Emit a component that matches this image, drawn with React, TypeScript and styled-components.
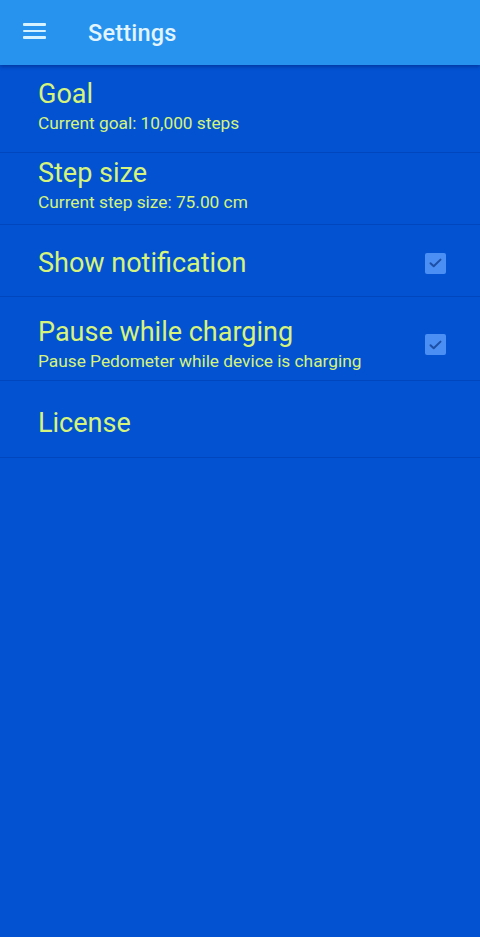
import React from 'react';
import styled, {createGlobalStyle} from 'styled-components';

const GlobalStyle = createGlobalStyle`
    html, body {
        margin: 0;
        padding: 0;
        background: #0352d1;
    }
    * {
        box-sizing: border-box;
    }
`

type Pref = {
    title: string;
    summary?: string;
    checked?: boolean;
    pad: [number, number];
};

const prefs: Pref[] = [
    {title: 'Goal', summary: 'Current goal: 10,000 steps', pad: [14, 18]},
    {title: 'Step size', summary: 'Current step size: 75.00 cm', pad: [5, 11]},
    {title: 'Show notification', checked: true, pad: [23, 18]},
    {title: 'Pause while charging', summary: 'Pause Pedometer while device is charging', checked: true, pad: [20, 8]},
    {title: 'License', pad: [27, 19]},
];

export default function App() {
    return (
        <>
            <GlobalStyle/>
            <Screen>
                <AppBar>
                    <MenuButton aria-label="menu">
                        <span/>
                        <span/>
                        <span/>
                    </MenuButton>
                    <BarTitle>Settings</BarTitle>
                </AppBar>
                <PrefList>
                    {prefs.map((p) => (
                        <PrefRow key={p.title} $top={p.pad[0]} $bottom={p.pad[1]}>
                            <PrefText>
                                <PrefTitle>{p.title}</PrefTitle>
                                {p.summary && <PrefSummary>{p.summary}</PrefSummary>}
                            </PrefText>
                            {p.checked !== undefined && (
                                <CheckBox>
                                    <svg width="13" height="10" viewBox="0 0 13 10">
                                        <path d="M1.5 5.2 L4.7 8.2 L11.5 1.6" fill="none" stroke="#1d4fa6"
                                              strokeWidth="2" strokeLinecap="round" strokeLinejoin="round"/>
                                    </svg>
                                </CheckBox>
                            )}
                        </PrefRow>
                    ))}
                </PrefList>
            </Screen>
        </>
    );
}

const Screen = styled.div`
    width: 480px;
    min-height: 937px;
    background: #0352d1;
    font-family: Roboto, "Liberation Sans", sans-serif;
`

const AppBar = styled.header`
    height: 65px;
    background: #2793ef;
    display: flex;
    align-items: center;
    padding-left: 23px;
    box-shadow: 0 2px 3px rgba(0, 20, 90, 0.35);
    position: relative;
`

const MenuButton = styled.div`
    width: 23px;
    display: flex;
    flex-direction: column;
    gap: 4px;
    margin-top: -3px;

    span {
        display: block;
        height: 2.5px;
        background: #d6f1ff;
        border-radius: 1px;
    }
`

const BarTitle = styled.h1`
    margin: 0 0 0 42px;
    font-size: 23.5px;
    font-weight: 500;
    color: #e2f5ff;
    letter-spacing: 0.2px;
`

const PrefList = styled.div`
    display: flex;
    flex-direction: column;
`

const PrefRow = styled.div<{ $top: number; $bottom: number }>`
    display: flex;
    align-items: center;
    padding: ${p => p.$top}px 34px ${p => p.$bottom}px 38px;
    border-bottom: 1px solid rgba(0, 40, 140, 0.28);
`

const PrefText = styled.div`
    flex: 1;
    display: flex;
    flex-direction: column;
    gap: 3px;
`

const PrefTitle = styled.div`
    font-size: 27px;
    line-height: 30px;
    color: #d6f37c;
`

const PrefSummary = styled.div`
    font-size: 17.3px;
    line-height: 22px;
    color: #d6f37c;
`

const CheckBox = styled.div`
    width: 21px;
    height: 21px;
    border-radius: 2px;
    background: #4b8ff4;
    display: flex;
    align-items: center;
    justify-content: center;
`
